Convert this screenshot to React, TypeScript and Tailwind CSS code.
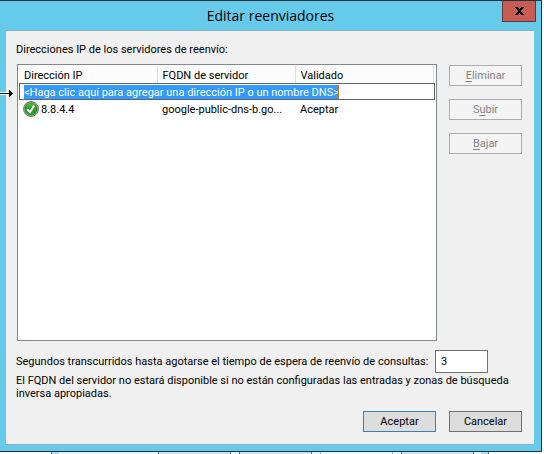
import React from "react";

type Server = { ip: string; fqdn: string; status: string };

const servers: Server[] = [
  { ip: "8.8.4.4", fqdn: "google-public-dns-b.go...", status: "Aceptar" },
];

const sideActions = [
  { key: "E", before: "", after: "liminar" },
  { key: "u", before: "S", after: "bir" },
  { key: "B", before: "", after: "ajar" },
];

function CloseButton() {
  return (
    <button
      type="button"
      aria-label="Cerrar"
      className="flex h-[21px] w-[34px] items-center justify-center border border-t-0 border-[#5f3640] bg-[#c75c53]"
    >
      <svg width="9" height="8" viewBox="0 0 9 8" shapeRendering="crispEdges">
        <path
          fill="#000"
          d="M0 0h3v1h1v1h1v-1h1v-1h3v1h-1v1h-1v1h-1v2h1v1h1v1h1v1h-3v-1h-1v-1h-1v1h-1v1h-3v-1h1v-1h1v-1h1v-2h-1v-1h-1v-1h-1z"
        />
      </svg>
    </button>
  );
}

function CheckIcon() {
  return (
    <svg width="16" height="16" viewBox="0 0 16 16" className="shrink-0" aria-hidden="true">
      <defs>
        <linearGradient id="green" x1="0" y1="0" x2="0" y2="1">
          <stop offset="0" stopColor="#5cc04e" />
          <stop offset="0.5" stopColor="#259a1d" />
          <stop offset="1" stopColor="#2fa526" />
        </linearGradient>
      </defs>
      <circle cx="8" cy="8" r="7.5" fill="#b9bdb9" stroke="#777c77" strokeWidth="1" />
      <circle cx="8" cy="8" r="6.2" fill="url(#green)" stroke="#1c6d17" strokeWidth="0.6" />
      <path d="M4.2 8.2 7 11 11.2 4.6" fill="none" stroke="#fff" strokeWidth="2" />
    </svg>
  );
}

function Arrow() {
  return (
    <svg
      width="13"
      height="7"
      viewBox="0 0 13 7"
      className="absolute top-[89px] left-0"
      shapeRendering="crispEdges"
      aria-hidden="true"
    >
      <path d="M0 2h9v3h-9z" fill="#fff" />
      <path d="M0 3h9v-3h1v1h1v1h1v1h1v1h-1v1h-1v1h-1v1h-1v-3h-9z" fill="#000" />
    </svg>
  );
}

function WindowBehind() {
  return (
    <div className="flex h-[2px]" aria-hidden="true">
      <div className="w-[51px]" />
      <div className="flex w-[438px] border-x border-[#707070] bg-[#f0f0f0]">
        <div className="w-[7px] bg-[#c3d8de]" />
        <div className="flex flex-1 justify-end gap-[8px] pr-[7px]">
          <div className="w-[73px] border-x border-[#707070] bg-[#dddddd]" />
          <div className="w-[73px] border-x border-[#707070] bg-[#dddddd]" />
          <div className="w-[73px] border-x border-[#adadad] bg-[#f4f4f4]" />
          <div className="w-[73px] border-x border-[#707070] bg-[#dddddd]" />
        </div>
        <div className="w-[7px] bg-[#c3d8de]" />
      </div>
    </div>
  );
}

export default function App() {
  return (
    <div className="bg-white pr-[2px] font-['Roboto','Liberation_Sans',sans-serif] text-[11px] leading-[13px] text-black">
      <main className="relative border-y border-r border-[#22323f] bg-[#66caea] pb-[6px]">
        <header className="grid h-[29px] grid-cols-[34px_1fr_34px] items-start pr-[5px] pl-[5px]">
          <h1 className="col-start-2 pt-[5px] text-center font-['Open_Sans',sans-serif] text-[14px] leading-[20px]">
            Editar reenviadores
          </h1>
          <CloseButton />
        </header>

        <section className="mr-[7px] ml-[6px] border-y border-[#8cb4c6] bg-[#f0f0f0] pt-[12px] pr-[11px] pb-[12px] pl-[10px]">
          <h2>Direcciones IP de los servidores de reenvío:</h2>

          <div className="mt-[8px] ml-px flex items-start gap-[12px]">
            <div className="h-[277px] flex-1 border border-[#828790] bg-white p-px">
              <table className="w-full table-fixed border-collapse text-left">
                <colgroup>
                  <col className="w-[138px]" />
                  <col className="w-[138px]" />
                  <col className="w-[138px]" />
                  <col />
                </colgroup>
                <thead>
                  <tr className="h-[17px] bg-[#fcfcfc]">
                    {["Dirección IP", "FQDN de servidor", "Validado"].map((name) => (
                      <th key={name} className="border-r border-[#dedede] pt-[2px] pl-[5px] font-normal">
                        {name}
                      </th>
                    ))}
                    <td className="p-0" />
                  </tr>
                </thead>
                <tbody>
                  <tr>
                    <td colSpan={4} className="p-0">
                      <div className="flex h-[17px] items-center border border-[#646464] pl-[4px]">
                        <input
                          aria-label="Nueva dirección"
                          defaultValue="<Haga clic aquí para agregar una dirección IP o un nombre DNS>"
                          className="h-[14px] w-[315px] border-r border-[#c87020] bg-[#3399ff] pt-px text-white outline-none"
                        />
                      </div>
                    </td>
                  </tr>
                  {servers.map((server) => (
                    <tr key={server.ip} className="h-[17px]">
                      <td className="p-0 pl-[4px]">
                        <span className="flex items-center gap-[2px]">
                          <CheckIcon />
                          <span className="pt-px">{server.ip}</span>
                        </span>
                      </td>
                      <td className="p-0 pt-px pl-[5px] whitespace-nowrap">{server.fqdn}</td>
                      <td className="p-0 pt-px pl-[5px]">{server.status}</td>
                    </tr>
                  ))}
                </tbody>
              </table>
            </div>

            <div className="mt-px mr-px flex w-[73px] flex-col gap-[13px]">
              {sideActions.map((action) => (
                <button
                  key={action.after}
                  type="button"
                  disabled
                  className="h-[21px] border border-[#adadad] bg-[#f4f4f4] text-[#838383]"
                >
                  {action.before}
                  <span className="underline underline-offset-2">{action.key}</span>
                  {action.after}
                </button>
              ))}
            </div>
          </div>

          <div className="mt-[9px] flex items-center">
            <label htmlFor="timeout" className="w-[419px] whitespace-nowrap">
              Segundos transcurridos hasta agotarse el tiempo de espera de reenvío de consultas:
            </label>
            <input
              id="timeout"
              defaultValue="3"
              className="h-[23px] w-[53px] border border-[#707070] bg-white px-[5px] outline-none"
            />
          </div>

          <p className="pt-px pr-[8px]">
            El FQDN del servidor no estará disponible si no están configuradas las entradas y zonas de búsqueda inversa
            apropiadas.
          </p>

          <footer className="mt-[11px] mr-px flex justify-end gap-[13px]">
            <button type="button" className="h-[21px] w-[73px] border border-[#3c7fb1] bg-[#dddddd]">
              Aceptar
            </button>
            <button type="button" className="h-[21px] w-[73px] border border-[#707070] bg-[#dddddd]">
              Cancelar
            </button>
          </footer>
        </section>
        <Arrow />
      </main>
      <WindowBehind />
    </div>
  );
}
